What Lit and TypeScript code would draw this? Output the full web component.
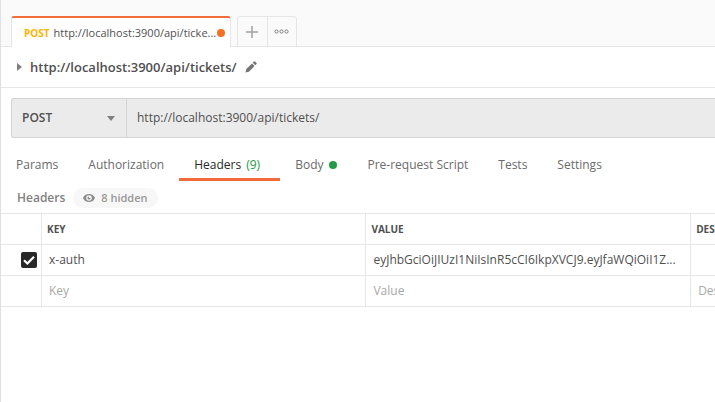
import { LitElement, html, css } from "lit";
import { customElement, state } from "lit/decorators.js";

interface RequestTab {
  id: string;
  label: string;
  count?: number;
  dot?: boolean;
}

const TABS: RequestTab[] = [
  { id: "params", label: "Params" },
  { id: "auth", label: "Authorization" },
  { id: "headers", label: "Headers", count: 9 },
  { id: "body", label: "Body", dot: true },
  { id: "pre", label: "Pre-request Script" },
  { id: "tests", label: "Tests" },
  { id: "settings", label: "Settings" },
];

@customElement("app-root")
export class AppRoot extends LitElement {
  @state() private active = "headers";

  static styles = css`
    :host {
      display: block;
      box-sizing: border-box;
      min-height: 100vh;
      overflow: hidden;
      border-left: 1px solid #e0e0e0;
      background: #fff;
      color: #505050;
      font: 12px/18px "Open Sans", sans-serif;
    }
    * {
      box-sizing: border-box;
    }
    button,
    input,
    select {
      margin: 0;
      padding: 0;
      border: 0;
      outline: 0;
      background: none;
      color: inherit;
      font: inherit;
    }
    svg {
      display: block;
      flex: none;
    }
    .tabbar {
      display: flex;
      gap: 6px;
      height: 47px;
      padding: 16px 0 0 10px;
      background: #fafafa;
      box-shadow: inset 0 -1px #e6e6e6;
    }
    .file-tab {
      display: flex;
      align-items: center;
      width: 220px;
      padding: 0 5px 0 12px;
      border: 1px solid #e6e6e6;
      border-top: 2px solid #f26b3a;
      border-bottom: 0;
      border-radius: 3px 3px 0 0;
      background: #fff;
    }
    .verb {
      margin-right: 4px;
      color: #ffb400;
      font-size: 10px;
      font-weight: 700;
    }
    .file-name {
      flex: 1;
      font-size: 11px;
      text-align: left;
      white-space: nowrap;
    }
    .unsaved {
      width: 8px;
      height: 8px;
      border-radius: 50%;
      background: #f47023;
    }
    .tab-tools {
      display: flex;
      width: 60px;
      border: 1px solid #e6e6e6;
      border-radius: 3px 3px 0 0;
    }
    .tool {
      display: grid;
      flex: 1;
      place-items: center;
    }
    .tool + .tool {
      border-left: 1px solid #e6e6e6;
    }
    .title-row {
      display: flex;
      align-items: center;
      height: 41px;
      padding-left: 15px;
      border-bottom: 1px solid #e6e6e6;
    }
    .title {
      margin: 0 8px;
      font-size: 13px;
      font-weight: 600;
    }
    .url-bar {
      display: flex;
      height: 40px;
      margin: 10px 0 0 10px;
      border: 1px solid #d4d4d4;
      border-right: 0;
      border-radius: 3px 0 0 3px;
      background: #ebebeb;
    }
    .method {
      display: grid;
      align-items: center;
      width: 115px;
      border-right: 1px solid #d4d4d4;
    }
    .method > * {
      grid-area: 1 / 1;
    }
    .method select {
      height: 38px;
      padding-left: 10px;
      appearance: none;
      font-weight: 600;
    }
    .method svg {
      justify-self: end;
      margin-right: 11px;
      pointer-events: none;
    }
    .url {
      flex: 1;
      min-width: 0;
      padding-left: 10px;
    }
    .tabs {
      display: flex;
      height: 43px;
    }
    .tab {
      display: flex;
      align-items: center;
      height: 43px;
      padding: 14px 15px 0;
      border-bottom: 3px solid transparent;
      color: #6b6b6b;
      white-space: nowrap;
    }
    .tab.on {
      border-color: #f26b3a;
      color: #282828;
    }
    .count {
      margin: 0 5px;
      color: #249c47;
    }
    .dot {
      width: 8px;
      height: 8px;
      margin-left: 6px;
      border-radius: 50%;
      background: #249c47;
    }
    .section {
      display: flex;
      align-items: center;
      gap: 8px;
      height: 32px;
      padding: 1px 0 0 16px;
      color: #808080;
      font-weight: 600;
    }
    .hidden-count {
      display: flex;
      align-items: center;
      gap: 6px;
      height: 20px;
      padding: 0 10px;
      border-radius: 10px;
      background: #f7f7f7;
      color: #979797;
      font-size: 11px;
      font-weight: 600;
    }
    table {
      width: 142%;
      table-layout: fixed;
      border-collapse: separate;
      border-spacing: 0;
      border-top: 1px solid #e6e6e6;
    }
    th,
    td {
      height: 31px;
      padding: 0 7px;
      border-bottom: 1px solid #e6e6e6;
      border-left: 1px solid #e6e6e6;
      text-align: left;
    }
    th {
      padding: 0 5px;
      font-size: 10px;
      font-weight: 700;
    }
    .key {
      width: 32%;
    }
    .pick {
      width: 40px;
      padding: 0 4px 0 0;
      border-left: 0;
    }
    .pick label {
      display: grid;
      justify-content: end;
    }
    .pick label > * {
      grid-area: 1 / 1;
    }
    .pick input {
      width: 16px;
      height: 16px;
      border-radius: 2px;
      appearance: none;
    }
    .pick input:checked {
      background: #282828;
    }
    .pick svg {
      pointer-events: none;
    }
    .cell {
      display: block;
      width: 100%;
      height: 18px;
      text-overflow: ellipsis;
    }
    .cell::placeholder {
      color: #a9a9a9;
      opacity: 1;
    }
  `;

  private renderTab(tab: RequestTab) {
    return html`<button
      role="tab"
      class="tab ${tab.id === this.active ? "on" : ""}"
      aria-selected=${tab.id === this.active}
      @click=${() => (this.active = tab.id)}
    >
      ${tab.label}${tab.count ? html`<span class="count">(${tab.count})</span>` : ""}${tab.dot
        ? html`<span class="dot"></span>`
        : ""}
    </button>`;
  }

  render() {
    return html`
      <header class="tabbar">
        <button class="file-tab">
          <span class="verb">POST</span>
          <span class="file-name">http://localhost:3900/api/ticke...</span>
          <span class="unsaved"></span>
        </button>
        <div class="tab-tools">
          <button class="tool" aria-label="New tab">
            <svg width="12" height="12" viewBox="0 0 12 12">
              <path d="M6 0v12M0 6h12" stroke="#a0a0a0" stroke-width="1.5" />
            </svg>
          </button>
          <button class="tool" aria-label="Tab options">
            <svg width="15" height="5" viewBox="0 0 15 5" fill="none" stroke="#808080">
              <circle cx="2.5" cy="2.5" r="1.6" />
              <circle cx="7.5" cy="2.5" r="1.6" />
              <circle cx="12.5" cy="2.5" r="1.6" />
            </svg>
          </button>
        </div>
      </header>
      <div class="title-row">
        <button aria-label="Expand description">
          <svg width="6" height="8" viewBox="0 0 6 8">
            <path d="M1 0l5 4-5 4z" fill="#808080" />
          </svg>
        </button>
        <span class="title">http://localhost:3900/api/tickets/</span>
        <button aria-label="Edit name">
          <svg width="12" height="12" viewBox="0 0 12 12" fill="#757575">
            <path d="M.5 11.5l.8-3.4L7 2.4l2.6 2.6-5.700 5.700z" />
            <path d="M7.700 1.700L8.900.5q.6-.5 1.200 0l1.400 1.400q.5.600 0 1.200l-1.200 1.200z" />
          </svg>
        </button>
      </div>
      <div class="url-bar">
        <div class="method">
          <select aria-label="Method">
            <option>POST</option>
            <option>GET</option>
          </select>
          <svg width="8" height="5" viewBox="0 0 8 5">
            <path d="M0 0h8L4 5z" fill="#808080" />
          </svg>
        </div>
        <input class="url" aria-label="Request URL" .value=${"http://localhost:3900/api/tickets/"} />
      </div>
      <nav class="tabs" role="tablist">${TABS.map((t) => this.renderTab(t))}</nav>
      <div class="section">
        <span>Headers</span>
        <button class="hidden-count">
          <svg width="12" height="8" viewBox="0 0 12 8">
            <path
              fill="#8c8c8c"
              fill-rule="evenodd"
              d="M6 0C3.200 0 1 1.600 0 4c1 2.400 3.200 4 6 4s5-1.600 6-4c-1-2.400-3.200-4-6-4zM6 1.200a2.800 2.800 0 1 1 0 5.600 2.800 2.800 0 0 1 0-5.600zM6 2.400a1.600 1.600 0 1 0 1.600 1.600L6 4z"
            />
          </svg>
          8 hidden
        </button>
      </div>
      <table>
        <thead>
          <tr>
            <th class="pick"></th>
            <th class="key">KEY</th>
            <th>VALUE</th>
            <th>DESCRIPTION</th>
          </tr>
        </thead>
        <tbody>
          <tr>
            <td class="pick">
              <label>
                <input type="checkbox" aria-label="Include x-auth" checked />
                <svg width="16" height="16" viewBox="0 0 16 16">
                  <path d="M3 8.300l3.400 3.200L13 4.700" fill="none" stroke="#fff" stroke-width="2.200" />
                </svg>
              </label>
            </td>
            <td><input class="cell" aria-label="Key" .value=${"x-auth"} /></td>
            <td>
              <input
                class="cell"
                aria-label="Value"
                .value=${"eyJhbGciOiJIUzI1NiIsInR5cCI6IkpXVCJ9.eyJfaWQiOiI1Z..."}
              />
            </td>
            <td><input class="cell" aria-label="Description" /></td>
          </tr>
          <tr>
            <td class="pick"></td>
            <td><input class="cell" aria-label="New key" placeholder="Key" /></td>
            <td><input class="cell" aria-label="New value" placeholder="Value" /></td>
            <td><input class="cell" aria-label="New description" placeholder="Description" /></td>
          </tr>
        </tbody>
      </table>
    `;
  }
}
